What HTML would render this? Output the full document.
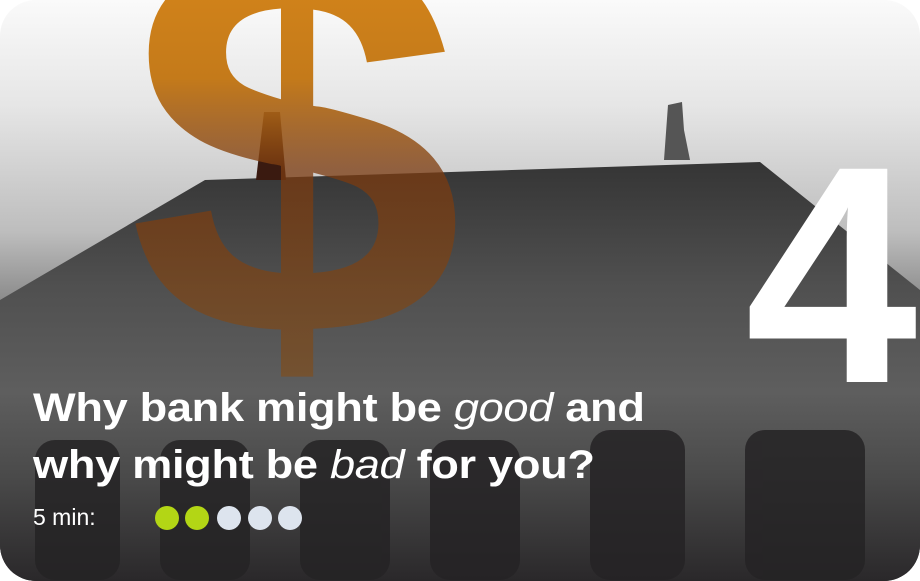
<!DOCTYPE html>
<html><head><style>
html,body{margin:0;padding:0;background:#fff;}
.card{position:relative;width:920px;height:581px;border-radius:36px;overflow:hidden;
background:linear-gradient(#fafafa 0%,#e6e6e6 18%,#bdbdbd 40%,#8a8a8a 52%,#444 70%,#2b2a2b 82%,#232123 100%);font-family:"Liberation Sans",sans-serif;}
svg{position:absolute;left:0;top:0;}
.t{position:absolute;left:33px;top:380px;color:#fff;font-weight:bold;font-size:40px;line-height:57px;letter-spacing:-0.3px;transform:scaleX(1.13);transform-origin:0 0;white-space:nowrap;}
.t i{font-weight:normal;}
.m{position:absolute;left:33px;top:504px;color:#fff;font-size:23px;}
.d{position:absolute;top:506px;width:24px;height:24px;border-radius:50%;background:#dde4ee;}
.g{background:#b3d615;}
.four{position:absolute;left:745px;top:110px;color:#fff;font-weight:bold;font-size:310px;line-height:330px;}
</style></head><body>
<div class="card">
<svg width="920" height="581">
<defs>
<linearGradient id="dg" x1="0" y1="0" x2="0" y2="1">
<stop offset="0" stop-color="#e8921a"/>
<stop offset="0.4" stop-color="#c47a1a"/>
<stop offset="0.55" stop-color="#7a3a10" stop-opacity="0.75"/>
<stop offset="1" stop-color="#8a5010" stop-opacity="0.5"/>
</linearGradient>
<linearGradient id="bg" x1="0" y1="0" x2="0" y2="1">
<stop offset="0" stop-color="#353535"/>
<stop offset="0.3" stop-color="#505050"/>
<stop offset="0.55" stop-color="#5e5e5e"/>
<stop offset="0.75" stop-color="#4a4a4a"/>
<stop offset="1" stop-color="#2a282a"/>
</linearGradient>
</defs>
<polygon points="0,300 205,180 760,162 920,290 920,581 0,581" fill="url(#bg)"/>
<g fill="#252325" opacity="0.85">
<rect x="35" y="440" width="85" height="140" rx="20"/>
<rect x="160" y="440" width="90" height="140" rx="20"/>
<rect x="300" y="440" width="90" height="140" rx="20"/>
<rect x="430" y="440" width="90" height="140" rx="20"/>
<rect x="590" y="430" width="95" height="150" rx="20"/>
<rect x="745" y="430" width="120" height="150" rx="20"/>
</g>
<polygon points="664,160 668,105 682,102 684,130 690,160" fill="#555"/>
<polygon points="256,180 264,112 280,112 286,180" fill="#3a1a10"/>
<text x="118" y="335" font-family="Liberation Sans" font-weight="bold" font-size="560" fill="url(#dg)" transform="scale(1.08,1)">$</text>
</svg>
<div class="four">4</div>
<div class="t">Why bank might be <i>good</i> and<br>why might be <i>bad</i> for you?</div>
<div class="m">5 min:</div>
<div class="d g" style="left:155px"></div>
<div class="d g" style="left:185px"></div>
<div class="d" style="left:217px"></div>
<div class="d" style="left:248px"></div>
<div class="d" style="left:278px"></div>
</div>
</body></html>
